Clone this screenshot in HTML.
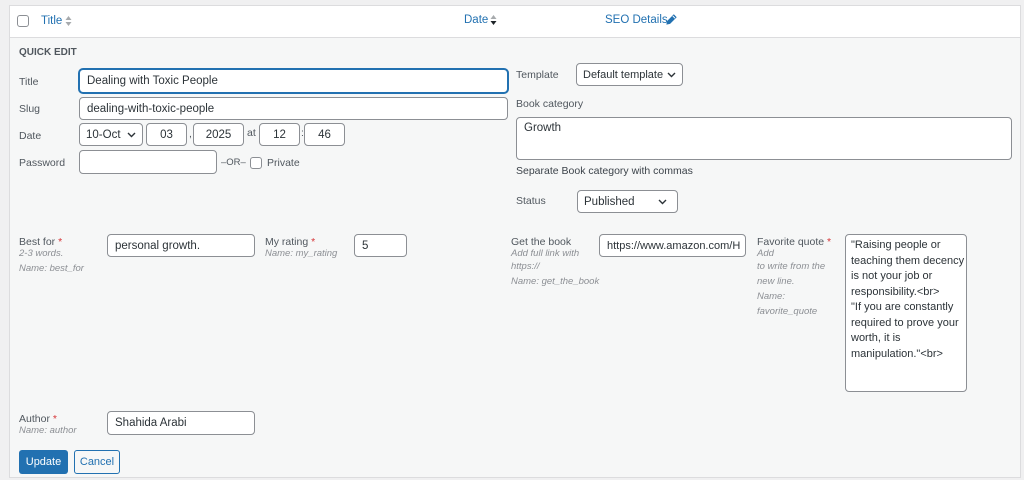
<!DOCTYPE html>
<html><head><meta charset="utf-8"><style>
*{box-sizing:border-box;margin:0;padding:0}
body{width:1024px;height:480px;background:#f0f0f1;font-family:"Liberation Sans",sans-serif;position:relative;overflow:hidden;color:#3c434a}
.a{position:absolute}
#panel{position:absolute;left:9px;top:5px;width:1012px;height:473px;background:#f6f7f7;border:1px solid #dcdcde}
#head{position:absolute;left:9px;top:5px;width:1012px;height:33px;background:#fff;border:1px solid #dcdcde}
.lnk{color:#2271b1;font-size:11.5px}
.lbl{font-size:10.5px;color:#50575e}
.inp{position:absolute;background:#fff;border:1px solid #8c8f94;border-radius:4px;font-size:11.5px;color:#2c3338;padding:0 7px;display:flex;align-items:center;white-space:nowrap;overflow:hidden}
.sel{justify-content:space-between;padding:0 6px}
.sel svg{flex:none;margin-left:4px}
.hint{font-size:9.5px;font-style:italic;color:#8c8f94;line-height:15px}
.req{color:#d63638}
.cb{position:absolute;width:13px;height:13px;border:1px solid #8c8f94;border-radius:3px;background:#fff}
</style></head><body>
<div id="panel"></div>
<div id="head"></div>
<div class="cb" style="left:17px;top:15px;width:12px;height:12px"></div>
<div class="a lnk" style="left:41px;top:15px">Title</div>
<svg class="a" style="left:65px;top:15px" width="7" height="12" viewBox="0 0 7 12"><path d="M0.5 5L3.5 1 6.5 5zM0.5 7l3 4 3-4z" fill="#a7aaad"/></svg>
<div class="a lnk" style="left:464px;top:14px">Date</div>
<svg class="a" style="left:490px;top:14px" width="7" height="12" viewBox="0 0 7 12"><path d="M0.5 5L3.5 1 6.5 5z" fill="#a7aaad"/><path d="M0.5 7l3 4 3-4z" fill="#1d2327"/></svg>
<div class="a lnk" style="left:605px;top:14px">SEO Details</div>
<svg class="a" style="left:666px;top:14px" width="11" height="11" viewBox="0 0 11 11"><path d="M1 10l0.6-2.8L7.8 1l2.2 2.2-6.2 6.2z" fill="#2271b1" stroke="#2271b1" stroke-width="1"/><path d="M6.8 2l2.2 2.2" stroke="#fff" stroke-width="1"/></svg>

<div class="a" style="left:19px;top:47px;font-size:10px;font-weight:bold;color:#50575e">QUICK EDIT</div>
<div class="a lbl" style="left:19px;top:76px">Title</div>
<div class="inp" style="left:79px;top:69px;width:429px;height:24px;border-color:#2271b1;box-shadow:0 0 0 1px #2271b1">Dealing with Toxic People</div>
<div class="a lbl" style="left:19px;top:103px">Slug</div>
<div class="inp" style="left:79px;top:97px;width:429px;height:23px">dealing-with-toxic-people</div>
<div class="a lbl" style="left:19px;top:130px">Date</div>
<div class="inp sel" style="left:79px;top:123px;width:64px;height:23px">10-Oct<svg width="9" height="6" viewBox="0 0 9 6"><path d="M1 1l3.5 3.5L8 1" fill="none" stroke="#2c3338" stroke-width="1.4"/></svg></div>
<div class="inp" style="left:146px;top:123px;width:41px;height:23px;justify-content:center">03</div>
<div class="a lbl" style="left:189px;top:128px">,</div>
<div class="inp" style="left:193px;top:123px;width:51px;height:23px;justify-content:center">2025</div>
<div class="a lbl" style="left:247px;top:127px">at</div>
<div class="inp" style="left:259px;top:123px;width:41px;height:23px;justify-content:center">12</div>
<div class="a lbl" style="left:301px;top:127px">:</div>
<div class="inp" style="left:304px;top:123px;width:41px;height:23px;justify-content:center">46</div>
<div class="a lbl" style="left:19px;top:157px">Password</div>
<div class="inp" style="left:79px;top:150px;width:138px;height:24px"></div>
<div class="a lbl" style="left:221px;top:157px;font-size:9.5px">–OR–</div>
<div class="cb" style="left:250px;top:157px;width:12px;height:12px"></div>
<div class="a lbl" style="left:267px;top:157px">Private</div>

<div class="a lbl" style="left:516px;top:69px">Template</div>
<div class="inp sel" style="left:576px;top:63px;width:107px;height:23px;font-size:11px">Default template<svg width="9" height="6" viewBox="0 0 9 6"><path d="M1 1l3.5 3.5L8 1" fill="none" stroke="#2c3338" stroke-width="1.4"/></svg></div>
<div class="a lbl" style="left:516px;top:98px">Book category</div>
<div class="inp" style="left:516px;top:117px;width:496px;height:43px;align-items:flex-start;padding-top:4px">Growth</div>
<div class="a lbl" style="left:516px;top:165px;color:#3c434a">Separate Book category with commas</div>
<div class="a lbl" style="left:516px;top:195px">Status</div>
<div class="inp sel" style="left:577px;top:190px;width:101px;height:23px;padding-right:10px">Published<svg width="9" height="6" viewBox="0 0 9 6"><path d="M1 1l3.5 3.5L8 1" fill="none" stroke="#2c3338" stroke-width="1.4"/></svg></div>

<div class="a" style="left:19px;top:236px"><div class="lbl">Best for <span class="req">*</span></div><div class="hint" style="line-height:11px">2-3 words.</div><div class="hint" style="margin-top:2px">Name: best_for</div></div>
<div class="inp" style="left:107px;top:234px;width:148px;height:23px">personal growth.</div>
<div class="a" style="left:265px;top:236px"><div class="lbl">My rating <span class="req">*</span></div><div class="hint" style="line-height:11px">Name: my_rating</div></div>
<div class="inp" style="left:354px;top:234px;width:53px;height:23px">5</div>
<div class="a" style="left:511px;top:236px"><div class="lbl">Get the book</div><div class="hint" style="line-height:11px">Add full link with</div><div class="hint">https://</div><div class="hint">Name: get_the_book</div></div>
<div class="inp" style="left:599px;top:234px;width:147px;height:23px;font-size:11px">https://www.amazon.com/H</div>
<div class="a" style="left:757px;top:236px"><div class="lbl">Favorite quote <span class="req">*</span></div><div class="hint" style="line-height:11px">Add</div><div class="hint">to write from the</div><div class="hint">new line.</div><div class="hint">Name:</div><div class="hint">favorite_quote</div></div>
<div class="inp" style="left:845px;top:234px;width:122px;height:158px;align-items:flex-start;white-space:nowrap;padding:3px 5px;line-height:15.5px;font-size:11px">"Raising people or<br>teaching them decency<br>is not your job or<br>responsibility.&lt;br&gt;<br>"If you are constantly<br>required to prove your<br>worth, it is<br>manipulation."&lt;br&gt;</div>

<div class="a" style="left:19px;top:413px"><div class="lbl">Author <span class="req">*</span></div><div class="hint" style="line-height:11px">Name: author</div></div>
<div class="inp" style="left:107px;top:411px;width:148px;height:24px">Shahida Arabi</div>
<div class="a" style="left:19px;top:450px;width:49px;height:24px;background:#2271b1;border-radius:3px;color:#fff;font-size:11px;display:flex;align-items:center;justify-content:center">Update</div>
<div class="a" style="left:74px;top:450px;width:46px;height:24px;background:#f6f7f7;border:1px solid #2271b1;border-radius:3px;color:#2271b1;font-size:11px;display:flex;align-items:center;justify-content:center">Cancel</div>
</body></html>
